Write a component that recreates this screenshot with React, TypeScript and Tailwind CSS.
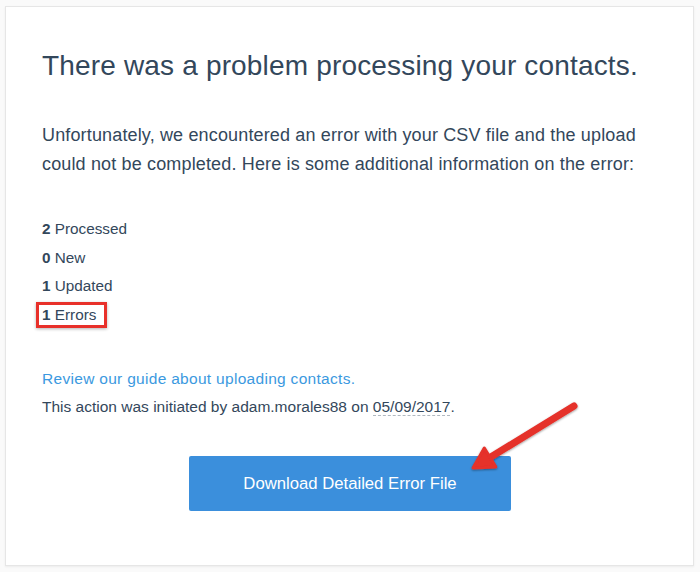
import React from "react";

export default function App() {
  return (
    <div className="w-[700px] h-[572px] bg-[#fafafa] pt-[6px] pl-[5px]" style={{ fontFamily: '"Liberation Sans", Arial, sans-serif' }}>
      <div className="relative w-[689px] h-[560px] bg-white border border-[#e6e6e6] shadow-[0_1px_2px_rgba(0,0,0,0.06)] pl-[36px] pt-[41px] text-[#33475b]">
        <h1 className="text-[28px] leading-[36px] font-normal tracking-[0.17px]">There was a problem processing your contacts.</h1>
        <p className="mt-[37px] text-[18px] leading-[29px] w-[630px] tracking-[0.15px]">
          Unfortunately, we encountered an error with your CSV file and the upload could not be completed. Here is some additional information on the error:
        </p>
        <ul className="mt-[36px] text-[15.3px] leading-[28.5px]">
          <li><b>2</b> Processed</li>
          <li><b>0</b> New</li>
          <li><b>1</b> Updated</li>
          <li className="relative">
            <b>1</b> Errors
            <span className="absolute left-[-6px] top-[1px] w-[71px] h-[26px] border-[3px] border-[#e8302a] shadow-[0_1px_3px_rgba(0,0,0,0.3)]" />
          </li>
        </ul>
        <div className="mt-[36px] text-[15.5px] leading-[28px]">
          <a className="text-[#3b99e0] tracking-[0.3px]">Review our guide about uploading contacts.</a>
          <div className="text-[#33475b]">
            This action was initiated by adam.morales88 on{" "}
            <span className="border-b border-dashed border-[#b0b8c0]">05/09/2017</span>.
          </div>
        </div>
        <div className="mt-[35px] ml-[147px] w-[322px] h-[55px] bg-[#3b8fdc] rounded-[2px] flex items-center justify-center text-white text-[16.7px]">
          Download Detailed Error File
        </div>
        <svg className="absolute left-[455px] top-[384px]" width="130" height="95" viewBox="0 0 130 95">
          <defs>
            <filter id="sh" x="-20%" y="-20%" width="140%" height="140%">
              <feDropShadow dx="0" dy="1" stdDeviation="1.2" floodColor="#000" floodOpacity="0.4" />
            </filter>
          </defs>
          <g filter="url(#sh)">
            <line x1="113" y1="15" x2="29" y2="66.5" stroke="#e5302a" strokeWidth="7" strokeLinecap="round" />
            <polygon points="12,77 23.3,57.1 34.8,75.9" fill="#e5302a" stroke="#e5302a" strokeWidth="3" strokeLinejoin="round" />
          </g>
        </svg>
      </div>
    </div>
  );
}
